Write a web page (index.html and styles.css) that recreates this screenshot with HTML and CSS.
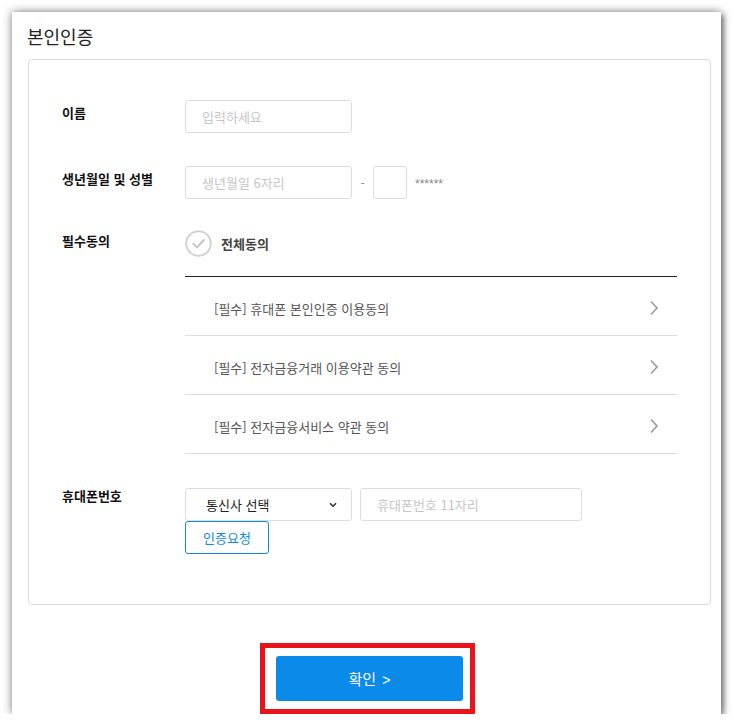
FILE: index.html
```html
<!DOCTYPE html>
<html lang="ko">
<head>
    <meta charset="UTF-8">
    <meta name="viewport" content="width=device-width, initial-scale=1.0">
    <title>본인인증</title>
    <link rel="stylesheet" href="styles.css">
</head>
<body>
    <div class="panel">
        <h1 class="title">본인인증</h1>
        <div class="card">
            <div class="row row-name">
                <div class="label">이름</div>
                <div class="field">
                    <input class="input input-md" type="text" placeholder="입력하세요">
                </div>
            </div>
            <div class="row row-birth">
                <div class="label">생년월일 및 성별</div>
                <div class="field">
                    <input class="input input-md" type="text" placeholder="생년월일 6자리">
                    <span class="dash">-</span>
                    <input class="input input-xs" type="text">
                    <span class="mask">******</span>
                </div>
            </div>
            <div class="row row-agree">
                <div class="label label-agree">필수동의</div>
                <div class="agree">
                    <div class="agree-all">
                        <span class="check">
                            <svg width="27" height="27" viewBox="0 0 27 27">
                                <circle cx="13.5" cy="13.5" r="12.3" fill="none" stroke="#d2d2d2" stroke-width="2"/>
                                <path d="M8.3 13.8 L12 17.4 L18.8 10" fill="none" stroke="#c4c4c4" stroke-width="2" stroke-linecap="round" stroke-linejoin="round"/>
                            </svg>
                        </span>
                        <span class="agree-all-text">전체동의</span>
                    </div>
                    <div class="agree-item">
                        <span>[필수] 휴대폰 본인인증 이용동의</span>
                        <svg class="arrow" width="10" height="16" viewBox="0 0 10 16"><path d="M2 1.5 L8 8 L2 14.5" fill="none" stroke="#9a9a9a" stroke-width="1.6"/></svg>
                    </div>
                    <div class="agree-item">
                        <span>[필수] 전자금융거래 이용약관 동의</span>
                        <svg class="arrow" width="10" height="16" viewBox="0 0 10 16"><path d="M2 1.5 L8 8 L2 14.5" fill="none" stroke="#9a9a9a" stroke-width="1.6"/></svg>
                    </div>
                    <div class="agree-item">
                        <span>[필수] 전자금융서비스 약관 동의</span>
                        <svg class="arrow" width="10" height="16" viewBox="0 0 10 16"><path d="M2 1.5 L8 8 L2 14.5" fill="none" stroke="#9a9a9a" stroke-width="1.6"/></svg>
                    </div>
                </div>
            </div>
            <div class="row row-phone">
                <div class="label label-phone">휴대폰번호</div>
                <div class="phone">
                    <div class="field">
                        <div class="select">
                            <span>통신사 선택</span>
                            <svg width="8" height="6" viewBox="0 0 8 6"><path d="M1 1.2 L4 4.2 L7 1.2" fill="none" stroke="#333" stroke-width="1.6"/></svg>
                        </div>
                        <input class="input input-lg" type="text" placeholder="휴대폰번호 11자리">
                    </div>
                    <button class="btn-request">인증요청</button>
                </div>
            </div>
        </div>
        <div class="confirm-wrap">
            <div class="confirm-frame">
                <button class="btn-confirm">확인 <span class="gt">&gt;</span></button>
            </div>
        </div>
    </div>
</body>
</html>
```

FILE: styles.css
```css
*{
    margin: 0;
    padding: 0;
    box-sizing: border-box;
}
body{
    background: #fff;
    font-family: "Noto Sans CJK KR", "Noto Sans", sans-serif;
    color: #222;
    overflow: hidden;
}
.panel{
    width: 709px;
    height: 702px;
    margin: 12px 0 0 12px;
    padding: 12px 10px 0 16px;
    background: #fff;
    box-shadow: 0 0 9px rgba(0, 0, 0, 0.5), 3px 3px 5px rgba(0, 0, 0, 0.35);
    overflow: hidden;
}
.title{
    font-size: 18px;
    font-weight: normal;
    line-height: 24px;
    color: #222;
    margin-bottom: 11px;
    margin-left: -1px;
}
.card{
    border: 1px solid #ddd;
    border-radius: 4px;
    padding: 40px 33px 50px 33px;
}
.row{
    display: flex;
}
.row-birth{
    margin-top: 33px;
}
.row-agree{
    margin-top: 31px;
}
.row-phone{
    margin-top: 34px;
}
.label{
    width: 123px;
    flex-shrink: 0;
    font-size: 13px;
    font-weight: bold;
    line-height: 20px;
    margin-top: 3px;
    color: #111;
}
.label-agree{
    margin-top: 1px;
}
.label-phone{
    margin-top: -2px;
}
.field{
    display: flex;
    align-items: center;
}
.input{
    height: 33px;
    border: 1px solid #ddd;
    border-radius: 3px;
    padding-left: 16px;
    font-family: inherit;
    font-size: 13px;
    color: #333;
    outline: none;
}
.input::placeholder{
    color: #c6c6c6;
}
.input-md{
    width: 167px;
}
.input-xs{
    width: 34px;
    padding: 0;
}
.input-lg{
    width: 222px;
    margin-left: 8px;
}
.dash{
    width: 21px;
    text-align: center;
    font-size: 12px;
    color: #888;
}
.mask{
    margin-left: 8px;
    font-family: "Liberation Sans", sans-serif;
    font-size: 12px;
    color: #888;
    padding-top: 3px;
}
.agree{
    flex: 1;
}
.agree-all{
    display: flex;
    align-items: center;
    padding-bottom: 19px;
    border-bottom: 1px solid #222;
}
.check{
    display: flex;
    width: 27px;
    height: 27px;
}
.agree-all-text{
    margin-left: 9px;
    font-size: 13px;
    font-weight: bold;
    color: #444;
}
.agree-item{
    display: flex;
    align-items: center;
    justify-content: space-between;
    height: 59px;
    padding: 4px 18px 0 29px;
    border-bottom: 1px solid #ddd;
    font-size: 13px;
    color: #555;
}
.phone{
    display: flex;
    flex-direction: column;
    align-items: flex-start;
}
.select{
    width: 167px;
    height: 33px;
    border: 1px solid #ddd;
    border-radius: 3px;
    padding: 0 14px 0 20px;
    display: flex;
    align-items: center;
    justify-content: space-between;
    font-size: 13px;
    color: #222;
}
.btn-request{
    width: 84px;
    height: 33px;
    background: #fff;
    border: 1px solid #0b8be6;
    border-radius: 3px;
    color: #0b8be6;
    font-family: inherit;
    font-size: 13px;
}
.confirm-wrap{
    margin-top: 38px;
    display: flex;
    justify-content: center;
    margin-left: -4px;
}
.confirm-frame{
    width: 215px;
    border: 5px solid #e8141c;
    padding: 8px 9px 8px 11px;
}
.btn-confirm{
    width: 187px;
    height: 45px;
    border: none;
    border-radius: 3px;
    background: #0a8be9;
    color: #fff;
    font-family: inherit;
    font-size: 15px;
}
.gt{
    margin-left: 2px;
    font-family: "Liberation Sans", sans-serif;
    font-size: 14px;
}
```
